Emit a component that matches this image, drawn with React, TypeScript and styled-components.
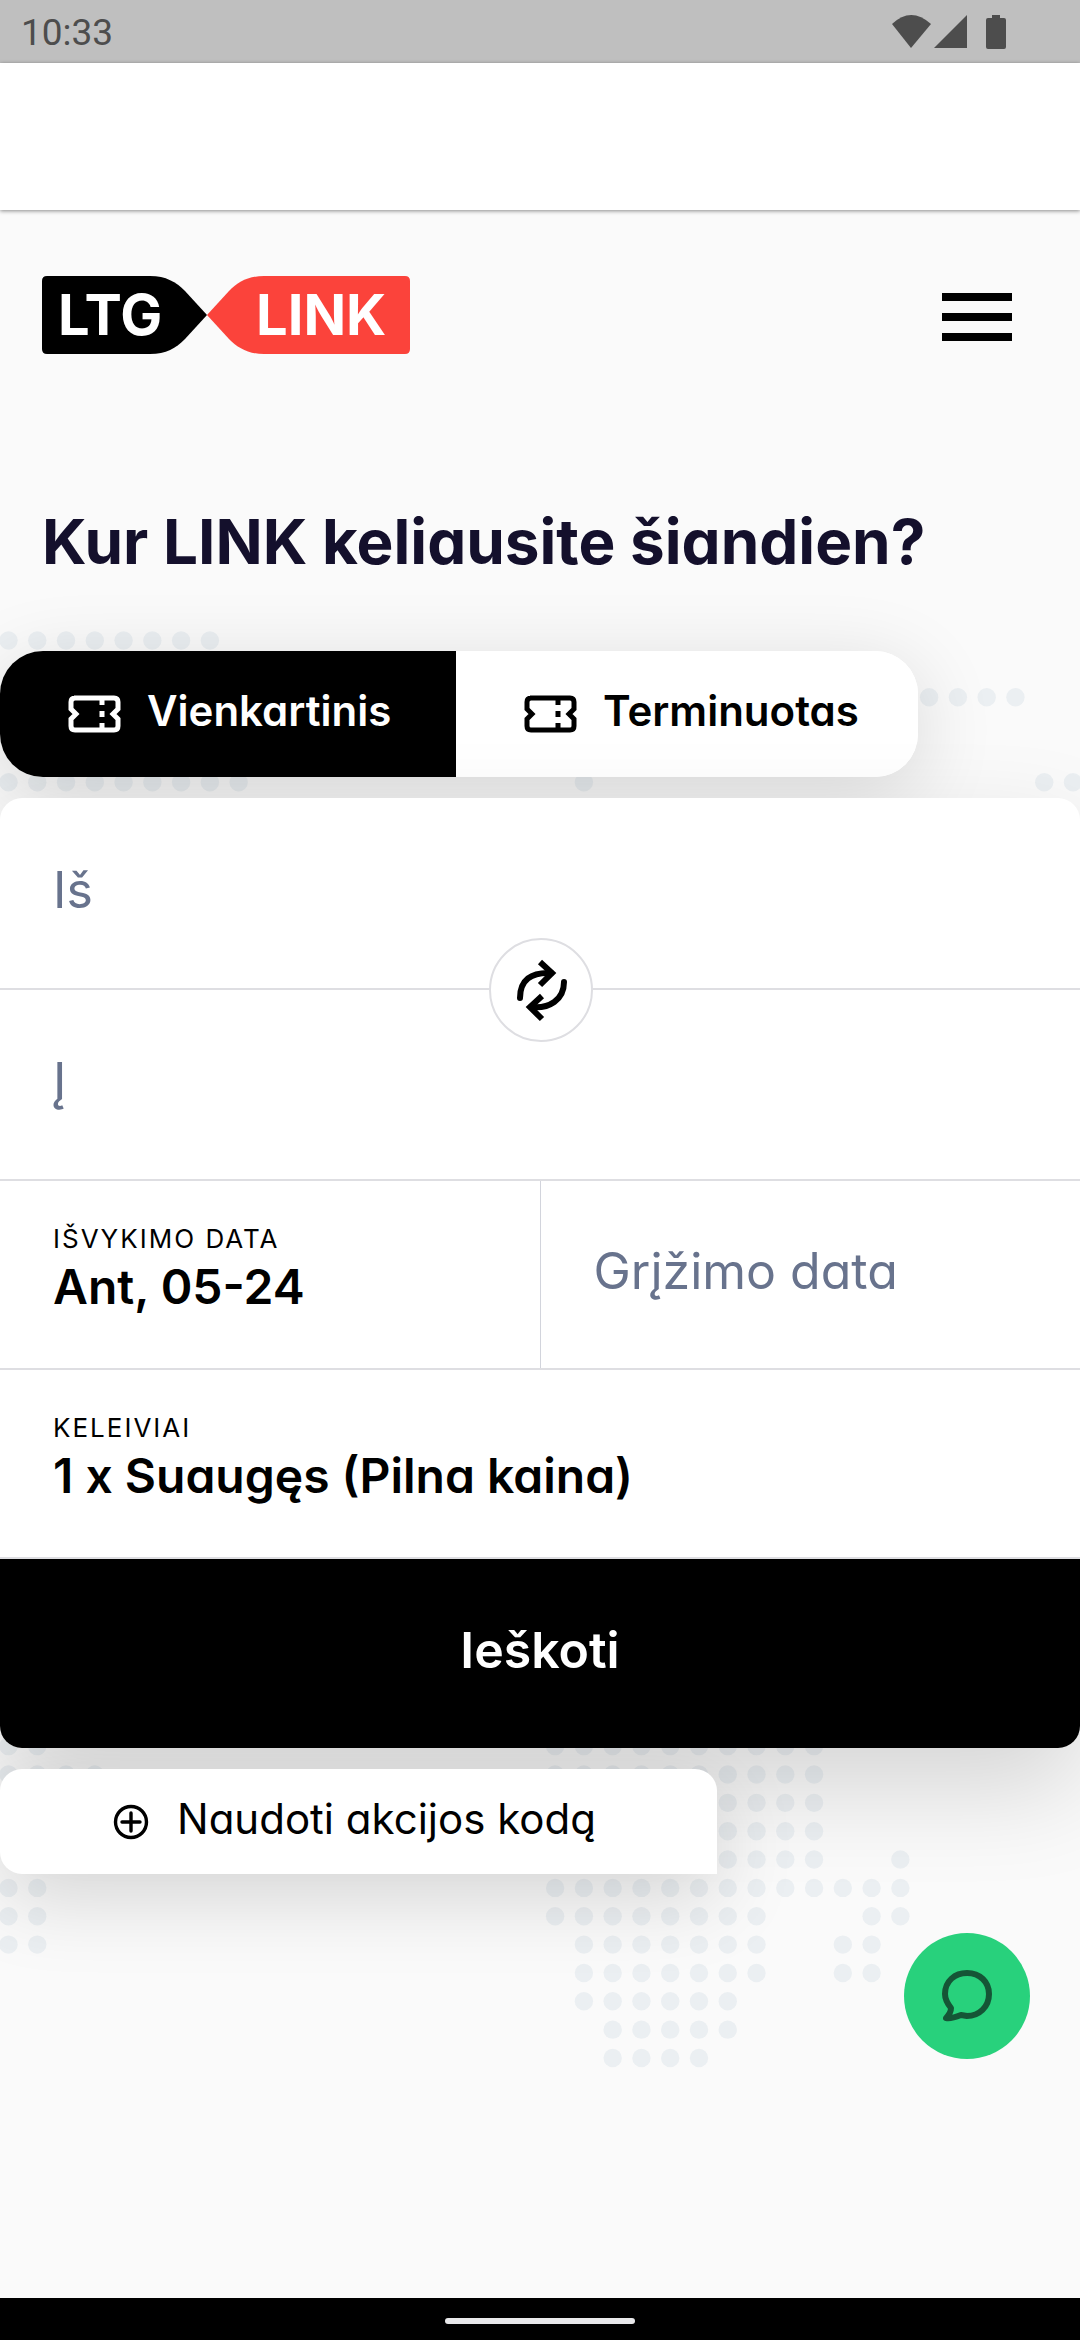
import React from "react";
import styled, { createGlobalStyle } from "styled-components";

const GlobalStyle = createGlobalStyle`
  * { box-sizing: border-box; }
  body { margin: 0; background: #fafafa; }
  button, input { font-family: inherit; font-feature-settings: inherit; }
`;

const sans = `Inter, "Noto Sans", "Liberation Sans", sans-serif`;

const Page = styled.div`
  position: relative;
  isolation: isolate;
  display: flex;
  flex-direction: column;
  min-height: 100vh;
  overflow: hidden;
  background: #fafafa;
  color: #000;
  font-family: ${sans};
  font-feature-settings: "cv11";
`;

const StatusBar = styled.div`
  display: flex;
  align-items: center;
  justify-content: space-between;
  height: 63px;
  padding: 0 72px 0 21px;
  background: #bfbfbf;
  color: #4d4d4d;
  font: 400 37px/60px Roboto, "Noto Sans", sans-serif;
`;

const Clock = styled.span`
  padding-top: 3px;
`;

const StatusIcons = styled.svg`
  width: 116px;
  height: 36px;
  fill: #4d4d4d;
`;

const BrowserBar = styled.div`
  height: 147px;
  background: #fff;
  box-shadow: 0 1px 4px rgba(0, 0, 0, 0.45);
`;

const Header = styled.header`
  display: flex;
  align-items: center;
  justify-content: space-between;
  margin-top: 66px;
  padding: 0 68px 0 42px;
`;

const LogoLink = styled.a`
  display: block;
  height: 78px;
`;

const MenuButton = styled.button`
  display: flex;
  flex-direction: column;
  justify-content: space-between;
  width: 70px;
  height: 48px;
  margin-top: 4px;
  padding: 0;
  border: 0;
  background: none;
`;

const MenuBar = styled.span`
  height: 8px;
  background: #000;
`;

const Title = styled.h1`
  margin: 142px 42px 0;
  color: #14102c;
  font-size: 62px;
  font-weight: 700;
  line-height: 92px;
`;

const Tabs = styled.div`
  display: flex;
  align-self: flex-start;
  height: 126px;
  margin-top: 63px;
  border-radius: 43px;
  background: #fff;
  box-shadow: 0 16px 80px rgba(0, 0, 0, 0.14);
`;

const Tab = styled.button<{ $active?: boolean }>`
  display: flex;
  align-items: center;
  gap: 24px;
  width: ${(p) => (p.$active ? 456 : 462)}px;
  padding: 0 0 0 67px;
  border: 0;
  border-radius: ${(p) => (p.$active ? "43px 0 0 43px" : "0 43px 43px 0")};
  background: ${(p) => (p.$active ? "#000" : "#fff")};
  color: ${(p) => (p.$active ? "#fff" : "#000")};
  font-size: 42px;
  font-weight: 600;
  line-height: 60px;
`;

const ButtonText = styled.span`
  padding-bottom: 6px;
`;

const SearchForm = styled.form`
  display: flex;
  flex-direction: column;
  margin-top: 21px;
  padding-top: 1px;
  border-radius: 22px;
  background: #fff;
  box-shadow: 0 40px 100px rgba(0, 0, 0, 0.15);
`;

const Row = styled.div`
  position: relative;
  display: flex;
  border-bottom: 2px solid #dedee2;
`;

const PlaceInput = styled.input`
  width: 100%;
  height: 189px;
  padding: 0 53px 8px;
  border: 0;
  border-radius: 22px;
  background: transparent;
  color: #000;
  font-size: 50px;
  outline: 0;
  &::placeholder { color: #68738d; opacity: 1; }
`;

const SwapButton = styled.button`
  position: absolute;
  z-index: 1;
  left: calc(50% - 51px);
  bottom: -54px;
  display: flex;
  align-items: center;
  justify-content: center;
  width: 104px;
  height: 104px;
  padding: 0;
  border: 2px solid #dedee2;
  border-radius: 50%;
  background: #fff;
`;

const Field = styled.button`
  display: flex;
  flex: 1;
  flex-direction: column;
  align-items: flex-start;
  justify-content: center;
  height: 187px;
  padding: 0 53px 8px;
  border: 0;
  background: none;
  color: #000;
  text-align: left;
  & + & { border-left: 1px solid #d2d4dc; }
`;

const FieldLabel = styled.span`
  font-size: 26px;
  letter-spacing: 2px;
  line-height: 32px;
  text-transform: uppercase;
`;

const FieldValue = styled.span`
  font-size: 48px;
  font-weight: 600;
  line-height: 64px;
`;

const FieldPlaceholder = styled.span`
  color: #68738d;
  font-size: 50px;
  line-height: 64px;
`;

const SubmitButton = styled.button`
  height: 189px;
  padding: 0 0 8px;
  border: 0;
  border-radius: 0 0 22px 22px;
  background: #000;
  color: #fff;
  font-size: 50px;
  font-weight: 600;
`;

const PromoButton = styled.button`
  display: flex;
  align-items: center;
  align-self: flex-start;
  gap: 28px;
  width: 717px;
  height: 105px;
  margin-top: 21px;
  padding: 0 0 0 113px;
  border: 0;
  border-radius: 22px 22px 0 22px;
  background: #fff;
  box-shadow: 0 24px 80px rgba(0, 0, 0, 0.15);
  color: #000;
  font-size: 42px;
`;

const ChatButton = styled.button`
  position: absolute;
  right: 50px;
  bottom: 281px;
  display: flex;
  align-items: center;
  justify-content: center;
  width: 126px;
  height: 126px;
  padding: 0;
  border: 0;
  border-radius: 50%;
  background: #28d17c;
`;

const NavBar = styled.div`
  display: flex;
  align-items: center;
  justify-content: center;
  height: 42px;
  margin-top: auto;
  padding-top: 4px;
  background: #000;
`;

const NavPill = styled.span`
  width: 190px;
  height: 6px;
  border-radius: 3px;
  background: #e8e8ea;
`;

const MapBackground = styled.svg`
  position: absolute;
  z-index: -1;
  top: 630px;
  left: 0;
  width: 1080px;
  height: 1440px;
  fill: #ebeff2;
`;

/* Each entry: row number, then the first and last column of a run of dots. */
const DOT_RUNS: number[][] = [
  [0, 0, 7],
  [2, 32, 35],
  [5, 0, 8], [5, 20, 20], [5, 36, 37],
  [39, 0, 1], [39, 19, 28],
  [40, 0, 3], [40, 19, 28],
  [41, 25, 28],
  [42, 25, 28],
  [43, 25, 28], [43, 31, 31],
  [44, 0, 1], [44, 19, 31],
  [45, 0, 1], [45, 19, 26], [45, 30, 31],
  [46, 0, 1], [46, 20, 26], [46, 29, 30],
  [47, 20, 26], [47, 29, 30],
  [48, 20, 25],
  [49, 21, 25],
  [50, 21, 24],
];

function DottedMap() {
  return (
    <MapBackground viewBox="0 0 1080 1440" aria-hidden="true">
      {DOT_RUNS.flatMap(([row, from, to]) =>
        Array.from({ length: to - from + 1 }, (_, i) => (
          <circle
            key={`${row}-${from + i}`}
            cx={8.5 + (from + i) * 28.77}
            cy={10.5 + row * 28.35}
            r={9.2}
          />
        ))
      )}
    </MapBackground>
  );
}

function Logo() {
  return (
    <svg width="368" height="78" viewBox="0 0 368 78" role="img" aria-label="LTG Link">
      <path d="M5 0H108C124 0 134 6 143 15L165 39L143 63C134 72 124 78 108 78H5Q0 78 0 73V5Q0 0 5 0Z" fill="#000" />
      <path d="M363 0H222C206 0 196 6 187 15L165 39L187 63C196 72 206 78 222 78H363Q368 78 368 73V5Q368 0 363 0Z" fill="#fb433b" />
      <g fill="#fff" fontFamily={sans} fontWeight="700" fontSize="56">
        <text x="16" y="59">LTG</text>
        <text x="214" y="59">LINK</text>
      </g>
    </svg>
  );
}

function TicketIcon() {
  return (
    <svg width="56" height="40" viewBox="0 0 56 40" fill="none" stroke="currentColor" strokeWidth="5">
      <path d="M7 4H47Q51 4 51 8V15L46 20L51 25V32Q51 36 47 36H8Q4 36 4 32V25L9 20L4 15V8Q4 4 8 4Z" />
      <path d="M35 5V11M35 17V23M35 29V35" />
    </svg>
  );
}

function SwapIcon() {
  return (
    <svg width="60" height="68" viewBox="0 0 60 68" fill="none" stroke="#000" strokeWidth="6">
      <path d="M9 42C9 24 20 16 40 17" strokeLinecap="round" />
      <path d="M29 6L41 17L29 29" />
      <path d="M53 26C53 44 38 53 20 51" strokeLinecap="round" />
      <path d="M31 40L19 51L31 63" />
    </svg>
  );
}

function PlusCircleIcon() {
  return (
    <svg width="36" height="36" viewBox="0 0 36 36" fill="none" stroke="#000" strokeWidth="3.4" strokeLinecap="round">
      <circle cx="18" cy="18" r="15.5" />
      <path d="M18 9V27M9 18H27" />
    </svg>
  );
}

function ChatIcon() {
  return (
    <svg width="52" height="56" viewBox="0 0 52 56" fill="none" stroke="#155536" strokeWidth="6" strokeLinejoin="round">
      <path d="M5 50C9 46 10 43 10 40C6 35 4 31 4 26C4 13 14 5 26 5C39 5 48 14 48 26C48 39 38 48 26 48L20 47C15 49 10 51 5 50Z" />
    </svg>
  );
}

export default function App() {
  return (
    <Page>
      <GlobalStyle />
      <DottedMap />
      <StatusBar>
        <Clock>10:33</Clock>
        <StatusIcons viewBox="0 0 116 36" aria-hidden="true">
          <path d="M0 10Q19 -8 39 10L19 34Z" />
          <path d="M75 1V34H42Z" />
          <path d="M100 1H108V4H112Q114 4 114 6V33Q114 35 112 35H96Q94 35 94 33V6Q94 4 96 4H100Z" />
        </StatusIcons>
      </StatusBar>
      <BrowserBar />
      <Header>
        <LogoLink href="#"><Logo /></LogoLink>
        <MenuButton type="button" aria-label="Meniu">
          <MenuBar /><MenuBar /><MenuBar />
        </MenuButton>
      </Header>
      <Title>Kur LINK keliausite šiandien?</Title>
      <Tabs>
        <Tab type="button" $active><TicketIcon /><ButtonText>Vienkartinis</ButtonText></Tab>
        <Tab type="button"><TicketIcon /><ButtonText>Terminuotas</ButtonText></Tab>
      </Tabs>
      <SearchForm onSubmit={(e) => e.preventDefault()}>
        <Row>
          <PlaceInput aria-label="Iš" placeholder="Iš" />
          <SwapButton type="button" aria-label="Sukeisti"><SwapIcon /></SwapButton>
        </Row>
        <Row>
          <PlaceInput aria-label="Į" placeholder="Į" />
        </Row>
        <Row>
          <Field type="button">
            <FieldLabel>Išvykimo data</FieldLabel>
            <FieldValue>Ant, 05-24</FieldValue>
          </Field>
          <Field type="button">
            <FieldPlaceholder>Grįžimo data</FieldPlaceholder>
          </Field>
        </Row>
        <Row>
          <Field type="button">
            <FieldLabel>Keleiviai</FieldLabel>
            <FieldValue>1 x Suaugęs (Pilna kaina)</FieldValue>
          </Field>
        </Row>
        <SubmitButton type="submit">Ieškoti</SubmitButton>
      </SearchForm>
      <PromoButton type="button"><PlusCircleIcon /><ButtonText>Naudoti akcijos kodą</ButtonText></PromoButton>
      <ChatButton type="button" aria-label="Pokalbis"><ChatIcon /></ChatButton>
      <NavBar><NavPill /></NavBar>
    </Page>
  );
}
